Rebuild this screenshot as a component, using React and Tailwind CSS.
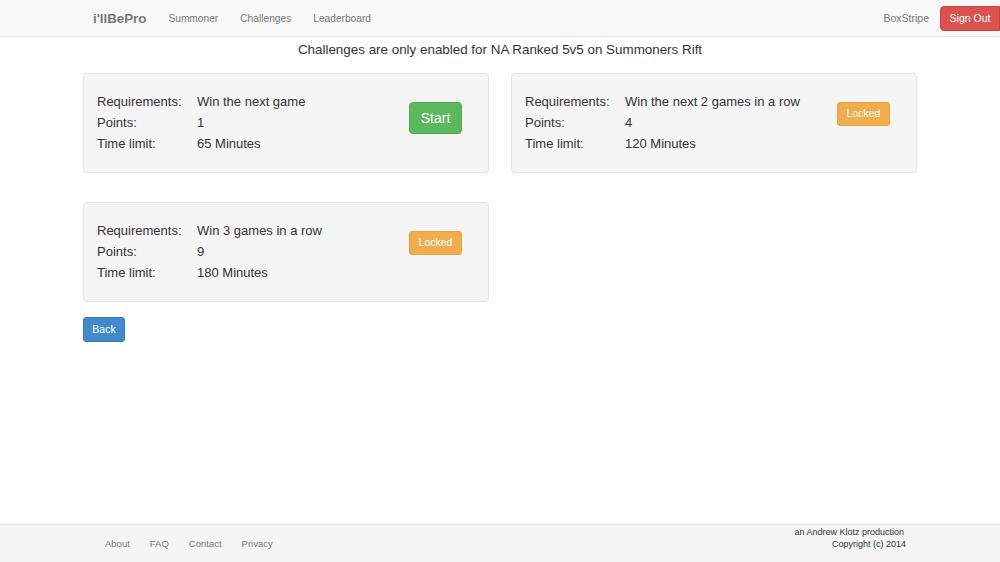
import React from 'react';

const challenges = [
  { req: 'Win the next game', points: 1, time: '65 Minutes', status: 'start' },
  { req: 'Win the next 2 games in a row', points: 4, time: '120 Minutes', status: 'locked' },
  { req: 'Win 3 games in a row', points: 9, time: '180 Minutes', status: 'locked' },
];

const ChallengeCard = ({ challenge }) => (
  <div className="flex justify-between items-start bg-[#f5f5f5] border border-[#e3e3e3] rounded-[4px] pl-[13px] pr-[26px] pt-[17px] pb-[18px] h-[100px]">
    <div className="text-[13px] leading-[21px] text-[#333]">
      <div className="flex"><span className="w-[100px]">Requirements:</span><span>{challenge.req}</span></div>
      <div className="flex"><span className="w-[100px]">Points:</span><span>{challenge.points}</span></div>
      <div className="flex"><span className="w-[100px]">Time limit:</span><span>{challenge.time}</span></div>
    </div>
    {challenge.status === 'start' ? (
      <button className="mt-[11px] w-[53px] h-[32px] bg-[#5cb85c] border border-[#4cae4c] rounded-[4px] text-white text-[14px]">
        Start
      </button>
    ) : (
      <button className="mt-[11px] w-[53px] h-[24px] bg-[#f0ad4e] border border-[#eea236] rounded-[3px] text-white text-[10.5px]">
        Locked
      </button>
    )}
  </div>
);

const App = () => {
  return (
    <div className="min-h-[562px] flex flex-col bg-white font-['Liberation_Sans',Arial,sans-serif]">
      <div className="h-[37px] bg-[#f8f8f8] border-b border-[#e7e7e7] flex items-center">
        <div className="pl-[93px] pt-[1px] flex items-center flex-1">
          <span className="text-[13.3px] font-bold text-[#777]">i'llBePro</span>
          <nav className="flex gap-[22px] ml-[22px] text-[10.2px] text-[#777]">
            <a>Summoner</a>
            <a>Challenges</a>
            <a>Leaderboard</a>
          </nav>
        </div>
        <div className="flex items-center">
          <a className="text-[10.5px] text-[#777] mr-[11px] pt-[1px]">BoxStripe</a>
          <button className="mt-[1px] w-[60px] h-[25px] bg-[#d9534f] border border-[#d43f3a] rounded-l-[4px] text-white text-[10.5px]">
            Sign Out
          </button>
        </div>
      </div>

      <div className="flex-1">
        <div className="w-[834px] mx-auto">
          <h4 className="text-center text-[13.4px] leading-[20px] text-[#333] mt-[3px] mb-[13px]">
            Challenges are only enabled for NA Ranked 5v5 on Summoners Rift
          </h4>
          <div className="grid grid-cols-2 gap-x-[22px] gap-y-[29px] w-[834px]">
            {challenges.map((c, i) => (
              <ChallengeCard key={i} challenge={c} />
            ))}
          </div>
          <button className="mt-[15px] w-[42px] h-[25px] bg-[#428bca] border border-[#357ebd] rounded-[3px] text-white text-[10.5px]">
            Back
          </button>
        </div>
      </div>

      <footer className="h-[38px] bg-[#f5f5f5] border-t border-[#e7e7e7] flex justify-between">
        <div className="flex gap-[20px] pl-[105px] pt-[12px] text-[9.5px] text-[#777]">
          <a>About</a>
          <a>FAQ</a>
          <a>Contact</a>
          <a>Privacy</a>
        </div>
        <div className="text-right text-[9px] leading-[12px] text-[#333] pr-[94px] pt-[1px]">
          <div className="pr-[2px]">an Andrew Klotz production</div>
          <div>Copyright (c) 2014</div>
        </div>
      </footer>
    </div>
  );
};

export default App;
